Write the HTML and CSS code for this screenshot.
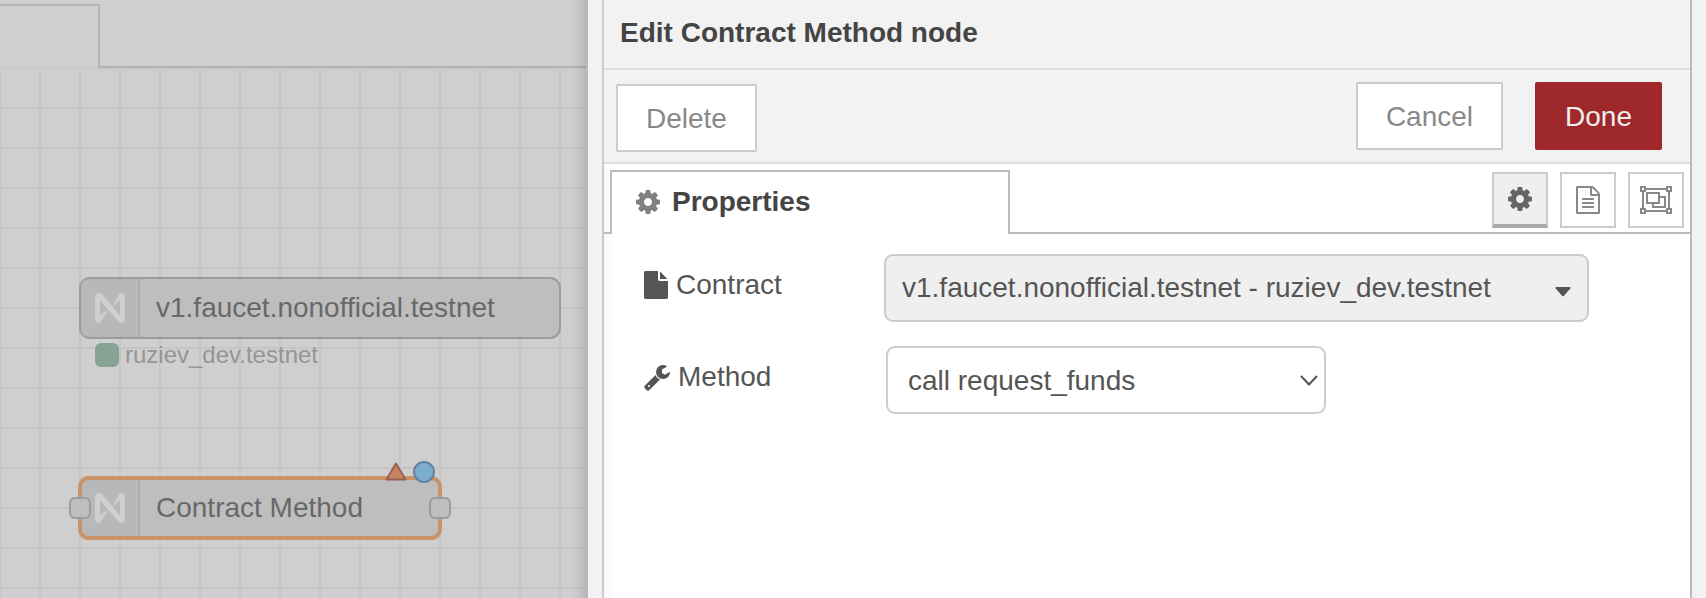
FILE: index.html
```html
<!DOCTYPE html>
<html lang="en">
<head>
<meta charset="utf-8">
<title>Edit Contract Method node</title>
<link rel="stylesheet" href="styles.css">
</head>
<body>
<svg class="sprite" aria-hidden="true">
  <symbol id="cog" viewBox="128 128 1536 1536"><path d="M1152 896q0-106-75-181t-181-75-181 75-75 181 75 181 181 75 181-75 75-181zm512-109v222q0 12-8 23t-20 13l-185 28q-19 54-39 91 35 50 107 138 10 12 10 25t-9 23q-27 37-99 108t-94 71q-12 0-26-9l-138-108q-44 23-91 38-16 136-29 186-7 28-36 28h-222q-14 0-24.500-8.500t-11.500-21.500l-28-184q-49-16-90-37l-141 107q-10 9-25 9-14 0-25-11-126-114-165-168-7-10-7-23 0-12 8-23 15-21 51-66.500t54-70.500q-27-50-41-99l-183-27q-13-2-21-12.500t-8-23.500v-222q0-12 8-23t19-13l186-28q14-46 39-92-40-57-107-138-10-12-10-24 0-10 9-23 26-36 98.500-107.500t94.500-71.500q13 0 26 10l138 107q44-23 91-38 16-136 29-186 7-28 36-28h222q14 0 24.500 8.500t11.500 21.500l28 184q49 16 90 37l142-107q9-9 24-9 13 0 25 10 129 119 165 170 7 8 7 22 0 12-8 23-15 21-51 66.500t-54 70.500q26 50 41 98l183 28q13 2 21 12.500t8 23.500z"/></symbol>
  <symbol id="near" viewBox="0 0 30 30"><path fill-rule="evenodd" d="M4 0C6 0 7 1 8 2L25 22.500V7L19.500 12.200C18.500 13 17.800 12.300 18.400 11.400L23.500 2C24.500.5 25.500 0 27 0C29 0 30 1.500 30 3V27C30 29 28.500 30 27 30C25 30 24 29.500 23 28L5 7.500V23L10.800 17.800C11.800 17 12.600 17.800 12 18.600L6.500 28C5.500 29.500 4.500 30 3 30C1 30 0 28.500 0 27V3C0 1 1.500 0 4 0Z"/></symbol>
</svg>
<div class="editor">
  <main class="workspace">
    <div class="workspace-tabs"><div class="workspace-tab"></div></div>
    <div class="canvas">
      <div class="node node-contract">
        <span class="node-icon"><svg><use href="#near"/></svg></span>
        <span class="node-label">v1.faucet.nonofficial.testnet</span>
      </div>
      <div class="node-status"><i class="status-dot"></i>ruziev_dev.testnet</div>
      <div class="node node-method">
        <span class="node-icon"><svg><use href="#near"/></svg></span>
        <span class="node-label">Contract Method</span>
        <i class="port port-in"></i>
        <i class="port port-out"></i>
        <svg class="badge-error" viewBox="0 0 22 19"><path d="M11 1.500L20.500 17.500H1.500Z"/></svg>
        <i class="badge-changed"></i>
      </div>
    </div>
  </main>
  <div class="separator"></div>
  <section class="tray">
    <header class="tray-header"><h1>Edit Contract Method node</h1></header>
    <div class="tray-toolbar">
      <button type="button" class="btn btn-delete">Delete</button>
      <div class="toolbar-right">
        <button type="button" class="btn">Cancel</button>
        <button type="button" class="btn btn-primary">Done</button>
      </div>
    </div>
    <div class="tray-tabs">
      <button type="button" class="tab"><svg class="icon-cog"><use href="#cog"/></svg>Properties</button>
      <div class="tab-buttons">
        <button type="button" class="icon-btn active" aria-label="Properties"><svg class="icon-cog"><use href="#cog"/></svg></button>
        <button type="button" class="icon-btn" aria-label="Description"><svg class="icon-file" viewBox="128 0 1536 1792"><path d="M1596 380q28 28 48 76t20 88v1152q0 40-28 68t-68 28h-1344q-40 0-68-28t-28-68v-1600q0-40 28-68t68-28h896q40 0 88 20t76 48zm-444-244v376h376q-10-29-22-41l-313-313q-12-12-41-22zm384 1528v-1024h-416q-40 0-68-28t-28-68v-416h-768v1536h1280zm-1024-864q0-14 9-23t23-9h704q14 0 23 9t9 23v64q0 14-9 23t-23 9h-704q-14 0-23-9t-9-23v-64zm736 224q14 0 23 9t9 23v64q0 14-9 23t-23 9h-704q-14 0-23-9t-9-23v-64q0-14 9-23t23-9h704zm0 256q14 0 23 9t9 23v64q0 14-9 23t-23 9h-704q-14 0-23-9t-9-23v-64q0-14 9-23t23-9h704z"/></svg></button>
        <button type="button" class="icon-btn" aria-label="Appearance"><svg class="icon-group" viewBox="0 0 32 28"><path d="M1 1H5V5H1ZM27 1H31V5H27ZM1 23H5V27H1ZM27 23H31V27H27ZM5 3H27M5 25H27M3 5V23M29 5V23M7 7H19V17H7ZM19 11H25V21H13V17"/></svg></button>
      </div>
    </div>
    <form class="form">
      <div class="form-row">
        <label for="contract"><svg class="icon-file" viewBox="128 0 1536 1792"><path d="M1152 512v-472q22 14 36 28l408 408q14 14 28 36h-472zm-128 32q0 40 28 68t68 28h544v1056q0 40-28 68t-68 28h-1344q-40 0-68-28t-28-68v-1600q0-40 28-68t68-28h800v544z"/></svg>Contract</label>
        <div class="field field-contract">
          <select id="contract"><option>v1.faucet.nonofficial.testnet - ruziev_dev.testnet</option></select>
          <svg class="caret" viewBox="0 0 16 10"><path d="M1.200 0H14.800Q16 .3 15.300 1.400L9 8.800Q8 9.800 7 8.800L.7 1.400Q0 .3 1.200 0Z"/></svg>
        </div>
      </div>
      <div class="form-row">
        <label for="method"><svg class="icon-wrench" viewBox="64 0 1664 1792"><path d="M448 1472q0-26-19-45t-45-19-45 19-19 45 19 45 45 19 45-19 19-45zm644-420l-682 682q-37 37-90 37-52 0-91-37l-106-108q-38-36-38-90 0-53 38-91l681-681q39 98 114.500 173.500t173.500 114.500zm634-435q0 39-23 106-47 134-164.500 217.500t-258.500 83.500q-185 0-316.500-131.500t-131.500-316.500 131.500-316.500 316.500-131.500q58 0 121.500 16.500t107.500 46.500q16 11 16 28t-16 28l-293 169v224l193 107q5-3 79-48.500t135.500-81 70.500-35.500q15 0 23.500 10t8.500 25z"/></svg>Method</label>
        <div class="field field-method">
          <select id="method"><option>call request_funds</option></select>
          <svg class="chevron" viewBox="0 0 18 11"><path d="M1 1L9 9.500L17 1"/></svg>
        </div>
      </div>
    </form>
  </section>
  <aside class="gutter"></aside>
</div>
</body>
</html>
```
FILE: styles.css
```css
* { box-sizing: border-box; }
body {
  margin: 0;
  font: 28px/32px "Liberation Sans", Arial, sans-serif;
  color: #555;
  background: #fff;
}
button, select { font: inherit; color: inherit; margin: 0; }
svg { display: block; fill: currentColor; }
.sprite { position: absolute; width: 0; height: 0; }
.editor { display: flex; min-height: 100vh; }

/* Shaded workspace */
.workspace {
  position: relative;
  flex: 0 0 588px;
  display: flex;
  flex-direction: column;
  background: #cfcfcf;
  border-right: 2px solid #b9b9b9;
  overflow: hidden;
}
.workspace::after {
  content: "";
  position: absolute;
  inset: 0 0 0 auto;
  width: 14px;
  background: linear-gradient(to right, rgba(0, 0, 0, 0), rgba(0, 0, 0, .04) 50%, rgba(0, 0, 0, .11));
}
.workspace-tabs {
  height: 68px;
  padding-top: 4px;
  border-bottom: 2px solid #b4b4b4;
}
.workspace-tab {
  width: 100px;
  height: 64px;
  background: #cfcfcf;
  border: solid #b4b4b4;
  border-width: 2px 2px 0 0;
}
.canvas {
  position: relative;
  flex: 1;
  background-image:
    linear-gradient(to right, #c5c5c5 1px, transparent 1px 39px, #c5c5c5 39px),
    linear-gradient(#c5c5c5 1px, transparent 1px 39px, #c5c5c5 39px);
  background-size: 40px 40px;
}
.node {
  position: absolute;
  display: flex;
  color: #686868;
  background: #bebebe;
  border: 2px solid #9c9c9c;
  border-radius: 11px;
}
.node-contract { left: 79px; top: 209px; width: 482px; height: 62px; }
.node-method {
  left: 78px;
  top: 408px;
  width: 364px;
  height: 64px;
  border: 4px solid #c89368;
}
.node-icon {
  display: flex;
  align-items: center;
  width: 59px;
  padding-left: 14px;
  background: #b8b8b8;
  border-right: 2px solid #adadad;
  border-radius: 8px 0 0 8px;
  color: #cfcfcf;
}
.node-method .node-icon { width: 58px; padding-left: 13px; }
.node-icon svg { width: 30px; height: 30px; }
.node-label { align-self: center; padding-left: 16px; }
.node-status {
  position: absolute;
  left: 95px;
  top: 273px;
  display: flex;
  align-items: center;
  gap: 6px;
  font-size: 24px;
  line-height: 28px;
  color: #959595;
}
.status-dot { width: 24px; height: 24px; border-radius: 6px; background: #86a395; }
.port {
  position: absolute;
  top: 17px;
  width: 22px;
  height: 22px;
  background: #bebebe;
  border: 2px solid #9c9c9c;
  border-radius: 6px;
}
.port-in { left: -13px; }
.port-out { right: -13px; }
.badge-error {
  position: absolute;
  top: -18px;
  right: 31px;
  width: 22px;
  height: 19px;
  fill: #c58560;
  stroke: #9b5f54;
  stroke-width: 2;
  stroke-linejoin: round;
}
.badge-changed {
  position: absolute;
  top: -19px;
  right: 3px;
  width: 22px;
  height: 22px;
  background: #7aaccd;
  border: 2px solid #66829a;
  border-radius: 50%;
}

/* Edit tray */
.separator { flex: 0 0 16px; background: #f2f2f2; border-right: 2px solid #ccc; }
.tray {
  flex: 1;
  min-width: 0;
  background: linear-gradient(to right, #f9f9f9, #fff 10px);
}
.gutter { flex: 0 0 16px; background: #f2f2f2; border-left: 2px solid #bbb; }
.tray-header {
  padding: 17px 16px 19px;
  background: #f2f2f2;
  border-bottom: 2px solid #ddd;
  color: #444;
}
.tray-header h1 { margin: 0; font-size: 28px; line-height: 32px; }
.tray-toolbar {
  display: flex;
  justify-content: space-between;
  padding: 12px 28px 10px 12px;
  background: #f2f2f2;
  border-bottom: 2px solid #ddd;
}
.toolbar-right { display: flex; align-items: flex-start; gap: 32px; }
.btn {
  height: 68px;
  padding: 2px 28px 0;
  color: #888;
  background: #fff;
  border: 2px solid #ccc;
  border-radius: 2px;
}
.btn-delete { margin-top: 2px; }
.btn-primary { color: #eee; background: #9e282a; border-color: #9e282a; }
.tray-tabs {
  display: flex;
  justify-content: space-between;
  align-items: flex-start;
  height: 70px;
  padding: 6px 6px 0;
  border-bottom: 2px solid #bbb;
}
.tab {
  display: flex;
  align-items: center;
  gap: 12px;
  width: 400px;
  height: 64px;
  padding: 0 24px 2px;
  font-weight: bold;
  color: #444;
  background: #fff;
  border: solid #bbb;
  border-width: 2px 2px 0;
}
.icon-cog { width: 24px; height: 24px; color: #808080; }
.tab-buttons { display: flex; gap: 12px; padding-top: 2px; }
.icon-btn {
  display: flex;
  align-items: center;
  justify-content: center;
  width: 56px;
  height: 56px;
  padding: 0;
  color: #888;
  background: #fff;
  border: 2px solid #ccc;
}
.icon-btn.active { background: #efefef; border-bottom: 4px solid #aaa; }
.active .icon-cog { color: #666; }
.icon-file { width: 24px; height: 28px; }
.icon-group { width: 32px; height: 28px; fill: none; stroke: currentColor; stroke-width: 2; }
.icon-wrench { width: 26px; height: 28px; }
.form {
  display: flex;
  flex-direction: column;
  gap: 24px;
  padding: 20px 40px;
}
.form-row { display: flex; align-items: flex-start; }
.form-row label {
  display: flex;
  align-items: center;
  gap: 8px;
  flex: 0 0 240px;
  padding-top: 15px;
}
.field { position: relative; }
.field select {
  appearance: none;
  display: block;
  width: 100%;
  height: 68px;
  padding: 0 16px;
  border: 2px solid #ccc;
  border-radius: 9px;
  background: #fff;
}
.field-contract { flex: 0 1 705px; }
.field-contract select { background: #efefef; }
.field-method { flex: 0 1 440px; margin-left: 2px; }
.field-method select { padding: 2px 20px 0; }
.caret { position: absolute; right: 18px; top: 33px; width: 16px; height: 10px; }
.chevron {
  position: absolute;
  right: 8px;
  top: 29px;
  width: 18px;
  height: 11px;
  fill: none;
  stroke: currentColor;
  stroke-width: 2;
}
```
